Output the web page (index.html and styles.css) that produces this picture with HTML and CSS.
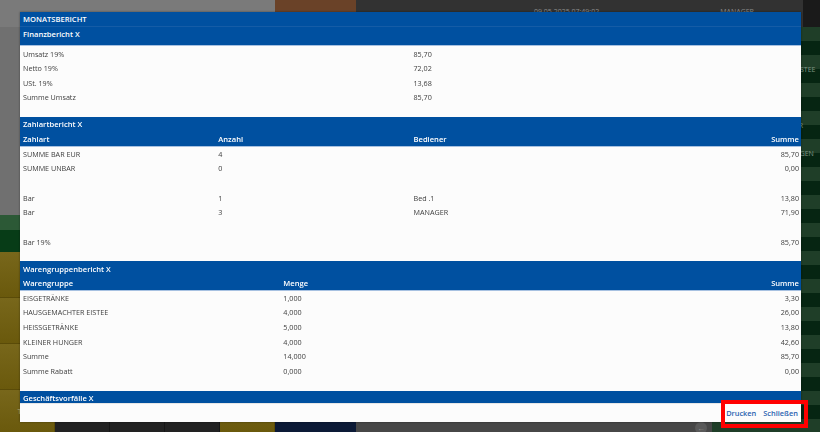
FILE: index.html
```html
<!DOCTYPE html>
<html lang="de">
<head>
  <meta charset="UTF-8" />
  <meta name="viewport" content="width=device-width, initial-scale=1.0"/>
  <title>Kasse - Monatsbericht</title>
  <link rel="stylesheet" href="styles.css">
</head>
<body>
  <!-- Kassenoberfläche im Hintergrund (abgedunkelt) -->
  <div class="pos">
    <header class="pos-header">
      <div class="hd-receipt">------------------</div>
      <div class="hd-fn"></div>
      <div class="hd-main">
        <span class="hd-back">&#8592;</span>
        <span class="hd-date">09.05.2025 07:49:02</span>
        <span class="hd-user">MANAGER</span>
      </div>
      <div class="hd-end"></div>
    </header>

    <div class="pos-left">
      <div class="receipt"></div>
      <div class="pay-bar"></div>
      <div class="tiles">
        <div class="tile">KAFFEE</div>
        <div class="tile">(ohne)</div>
        <div class="tile">ORIGINAL</div>
      </div>
      <div class="bottom-row">
        <div class="btn olive">TISCH</div>
        <div class="btn dark"></div>
        <div class="btn dark"></div>
        <div class="btn dark"></div>
        <div class="btn olive"></div>
      </div>
    </div>

    <div class="pos-fn">
      <div class="fn-space"></div>
      <div class="btn navy"></div>
    </div>

    <div class="pos-order">
      <span class="round-arrow">&#8592;</span>
    </div>

    <div class="pos-groups">
      <div class="group">EISGETRÄNKE</div>
      <div class="group">HAUSGEMACHTER EISTEE</div>
      <div class="group">HEISSGETRÄNKE</div>
      <div class="group">KLEINER HUNGER</div>
      <div class="group">SONDERBESTELLUNGEN</div>
      <div class="group"></div>
      <div class="group"></div>
      <div class="group"></div>
      <div class="group"></div>
      <div class="group"></div>
      <div class="group"></div>
      <div class="group"></div>
      <div class="group"></div>
      <div class="group"></div>
      <div class="group"></div>
    </div>
  </div>

  <!-- Monatsbericht -->
  <div class="modal">
    <div class="modal-title">MONATSBERICHT</div>

    <div class="modal-body">
      <table class="report">
        <thead>
          <tr class="report-title"><th colspan="2">Finanzbericht X</th></tr>
          <tr class="report-gap"><th></th><th></th></tr>
        </thead>
        <tbody>
          <tr><td>Umsatz 19%</td><td>85,70</td></tr>
          <tr><td>Netto 19%</td><td>72,02</td></tr>
          <tr><td>USt. 19%</td><td>13,68</td></tr>
          <tr><td>Summe Umsatz</td><td>85,70</td></tr>
        </tbody>
      </table>

      <table class="report">
        <thead>
          <tr class="report-title"><th colspan="4">Zahlartbericht X</th></tr>
          <tr class="report-cols">
            <th>Zahlart</th><th>Anzahl</th><th>Bediener</th><th class="num">Summe</th>
          </tr>
        </thead>
        <tbody>
          <tr><td>SUMME BAR EUR</td><td>4</td><td></td><td class="num">85,70</td></tr>
          <tr><td>SUMME UNBAR</td><td>0</td><td></td><td class="num">0,00</td></tr>
          <tr><td>&nbsp;</td><td></td><td></td><td></td></tr>
          <tr><td>Bar</td><td>1</td><td>Bed .1</td><td class="num">13,80</td></tr>
          <tr><td>Bar</td><td>3</td><td>MANAGER</td><td class="num">71,90</td></tr>
          <tr><td>&nbsp;</td><td></td><td></td><td></td></tr>
          <tr><td>Bar 19%</td><td></td><td></td><td class="num">85,70</td></tr>
        </tbody>
      </table>

      <table class="report">
        <thead>
          <tr class="report-title"><th colspan="3">Warengruppenbericht X</th></tr>
          <tr class="report-cols">
            <th>Warengruppe</th><th>Menge</th><th class="num">Summe</th>
          </tr>
        </thead>
        <tbody>
          <tr><td>EISGETRÄNKE</td><td>1,000</td><td class="num">3,30</td></tr>
          <tr><td>HAUSGEMACHTER EISTEE</td><td>4,000</td><td class="num">26,00</td></tr>
          <tr><td>HEISSGETRÄNKE</td><td>5,000</td><td class="num">13,80</td></tr>
          <tr><td>KLEINER HUNGER</td><td>4,000</td><td class="num">42,60</td></tr>
          <tr><td>Summe</td><td>14,000</td><td class="num">85,70</td></tr>
          <tr><td>Summe Rabatt</td><td>0,000</td><td class="num">0,00</td></tr>
        </tbody>
      </table>

      <table class="report">
        <thead>
          <tr class="report-title"><th colspan="3">Geschäftsvorfälle X</th></tr>
        </thead>
      </table>
    </div>

    <div class="modal-footer">
      <button class="link-btn">Drucken</button>
      <button class="link-btn">Schließen</button>
    </div>
  </div>

  <!-- Markierung der Aktionen -->
  <div class="mark"></div>
</body>
</html>
```

FILE: styles.css
```css
* {
  margin: 0;
  padding: 0;
  box-sizing: border-box;
}

body {
  font-family: "Open Sans", "Noto Sans", sans-serif;
  width: 820px;
  height: 432px;
  overflow: hidden;
  background: #1b1b1b;
}

/* ---------- Kasse im Hintergrund ---------- */

.pos {
  display: grid;
  grid-template-columns: 275px 81px 356px 108px;
  grid-template-rows: 27px 405px;
  height: 432px;
}

.pos-header {
  grid-column: 1 / -1;
  display: flex;
  font-size: 7px;
  color: #8c8c8c;
}

.hd-receipt {
  width: 275px;
  background: #7a7a7a;
  padding: 8px 0 0 110px;
  letter-spacing: -1px;
  color: #9c9c9c;
}

.hd-fn {
  width: 81px;
  background: #6a4228;
}

.hd-main {
  flex: 1;
  background: #323232;
  display: flex;
  padding-top: 7px;
}

.hd-back {
  margin-left: 8px;
  font-size: 9px;
  line-height: 9px;
}

.hd-date {
  margin-left: 161px;
}

.hd-user {
  margin-left: 121px;
}

.hd-end {
  width: 17px;
  background: #1a1a1a;
}

.pos-left {
  display: flex;
  flex-direction: column;
}

.receipt {
  flex: 1;
  background: #707070;
}

.pay-bar {
  height: 37px;
  background: linear-gradient(#2c5936 0, #2c5936 15px, #073c17 15px);
}

.tiles {
  display: grid;
  grid-template-columns: 1fr;
  grid-auto-rows: 46px;
}

.tile,
.btn {
  display: flex;
  align-items: center;
  justify-content: center;
  font-size: 7px;
  color: #b9ad7a;
}

.tile {
  background: linear-gradient(#78671b, #6a590c);
  border-bottom: 1px solid #5a4b08;
}

.bottom-row {
  height: 42px;
  display: grid;
  grid-template-columns: repeat(5, 1fr);
}

.btn.olive {
  background: linear-gradient(#78671b, #6a590c);
  border-right: 1px solid #5a4b08;
  color: #b9ad7a;
}

.btn.dark {
  background: #222;
  border-right: 1px solid #161616;
}

.btn.navy {
  height: 42px;
  background: #0c1a36;
}

.pos-fn {
  display: flex;
  flex-direction: column;
  background: #3b3b3b;
}

.fn-space {
  flex: 1;
}

.pos-order {
  position: relative;
  background: #474747;
}

.round-arrow {
  position: absolute;
  right: 5px;
  bottom: -2px;
  width: 12px;
  height: 12px;
  border-radius: 50%;
  background: #5a5a5a;
  color: #8f8f8f;
  font-size: 8px;
  line-height: 12px;
  text-align: center;
}

.pos-groups {
  display: flex;
  flex-direction: column;
  background: #072612;
}

.group {
  height: 28px;
  flex-shrink: 0;
  display: flex;
  align-items: center;
  justify-content: center;
  padding-left: 16px;
  font-size: 7px;
  white-space: nowrap;
  color: #7f9585;
  background: linear-gradient(#1f3e28 0, #1f3e28 14px, #062512 14px);
}

/* ---------- Monatsbericht ---------- */

.modal {
  position: fixed;
  left: 20px;
  top: 12px;
  width: 781px;
  height: 410px;
  display: flex;
  flex-direction: column;
  background: #fcfcfc;
  box-shadow: 0 0 2px rgba(0, 0, 0, 0.4);
}

.modal-title {
  height: 15px;
  padding: 0 3px;
  background: #0050a0;
  border-bottom: 1px solid #155ca6;
  color: #fff;
  font-size: 7.6px;
  font-weight: 600;
  line-height: 14px;
}

.modal-body {
  flex: 1;
  overflow: hidden;
}

.report {
  width: 100%;
  table-layout: fixed;
  border-collapse: collapse;
  font-size: 7.2px;
  color: #404040;
  margin-bottom: 12.33px;
}

.report th,
.report td {
  height: 14.67px;
  padding: 0 2px 0 3px;
  text-align: left;
  white-space: nowrap;
  overflow: hidden;
}

.report thead {
  background: #0050a0;
  color: #fff;
}

.report th {
  font-size: 7.6px;
  font-weight: 600;
}

.report .report-gap th {
  height: 4.33px;
}

.report tbody tr:first-child td {
  border-top: 1px solid #a7c1e1;
}

.report .num {
  text-align: right;
}

.modal-footer {
  height: 19px;
  display: flex;
  justify-content: flex-end;
  align-items: center;
  gap: 7px;
  padding-right: 3px;
  background: #fcfcfc;
  border-top: 1px solid #e6e6e6;
}

.link-btn {
  border: none;
  background: none;
  font-family: inherit;
  font-size: 7.4px;
  font-weight: 600;
  color: #2a62b0;
  cursor: pointer;
}

/* Rahmen um Drucken / Schließen */
.mark {
  position: fixed;
  left: 721px;
  top: 400px;
  width: 87px;
  height: 28px;
  border: 4px solid #ff0000;
  pointer-events: none;
}
```
